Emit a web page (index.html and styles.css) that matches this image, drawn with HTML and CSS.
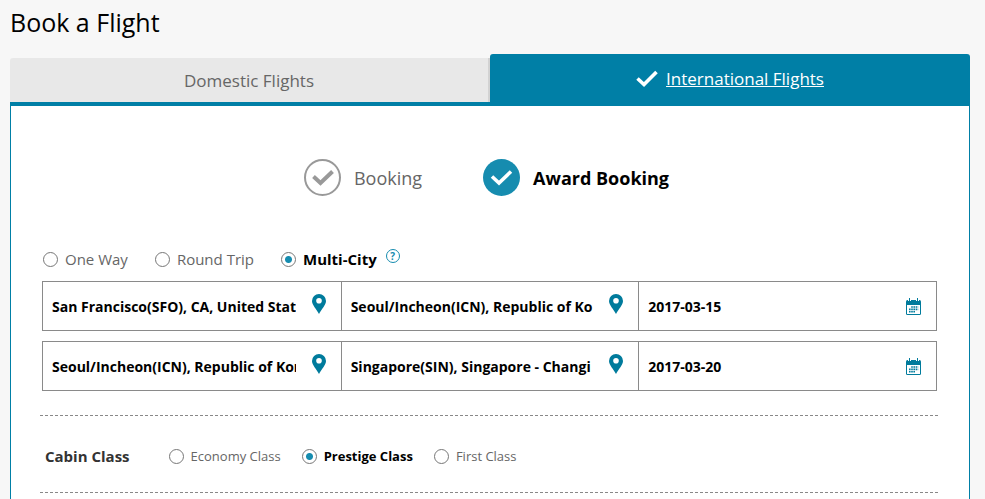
FILE: index.html
```html
<!DOCTYPE html>
<html lang="en">
<head>
<meta charset="utf-8">
<meta name="viewport" content="width=device-width, initial-scale=1">
<title>Book a Flight</title>
<link rel="stylesheet" href="styles.css">
</head>
<body>
<svg class="defs" aria-hidden="true">
  <symbol id="pin" viewBox="0 0 14 20"><path fill="currentColor" fill-rule="evenodd" d="M7 0a7 7 0 0 0-7 7c0 4 4.500 8 7 13 2.500-5 7-9 7-13a7 7 0 0 0-7-7zm0 4a2.800 2.800 0 1 1 0 5.600A2.800 2.800 0 0 1 7 4z"/></symbol>
  <symbol id="calendar" viewBox="0 0 15 17">
    <rect x="0" y="2" width="15" height="15" rx="1.500" fill="currentColor"/>
    <path fill="#fff" d="M1 7h13v9H1zM2 0h3v3H2zM10 0h3v3h-3z"/>
    <path fill="currentColor" d="M3 0h1v4H3zM11 0h1v4h-1z"/>
    <path fill="none" stroke="currentColor" stroke-width="1.600" stroke-dasharray="1.600 .6" d="M5.200 9h7M3 11.400h9.200M3 13.800h6.600"/>
  </symbol>
</svg>
<main class="page">
  <h1 class="title">Book a Flight</h1>
  <nav class="tabs">
    <a class="tab" href="#domestic">Domestic Flights</a>
    <a class="tab tab-active" href="#international" aria-current="page">
      <svg class="tab-tick" viewBox="0 0 22 17" aria-hidden="true"><path d="M1.500 8.500 8 14.500 20.500 2" fill="none" stroke="currentColor" stroke-width="3.600"/></svg>
      <span class="tab-text">International Flights</span>
    </a>
  </nav>
  <form class="panel">
    <div class="kinds">
      <button class="kind" type="button" aria-pressed="false">
        <svg class="kind-icon" viewBox="0 0 37 37" aria-hidden="true"><circle cx="18.500" cy="18.500" r="17.500" fill="none" stroke="#999" stroke-width="2"/><path d="M9.500 17.500 16.500 24 28.500 12.500" fill="none" stroke="#999" stroke-width="4"/></svg>
        <span>Booking</span>
      </button>
      <button class="kind kind-active" type="button" aria-pressed="true">
        <svg class="kind-icon" viewBox="0 0 37 37" aria-hidden="true"><circle cx="18.500" cy="18.500" r="18.500" fill="#168caf"/><path d="M9 17.500 16 24 28 12.500" fill="none" stroke="#fff" stroke-width="3.600"/></svg>
        <span>Award Booking</span>
      </button>
    </div>
    <div class="trips">
      <label class="option"><input class="radio" type="radio" name="trip"><span>One Way</span></label>
      <label class="option"><input class="radio" type="radio" name="trip"><span>Round Trip</span></label>
      <label class="option"><input class="radio" type="radio" name="trip" checked><span>Multi-City</span></label>
      <button class="help" type="button" aria-label="Help">?</button>
    </div>
    <div class="legs">
      <div class="leg">
        <div class="cell"><input class="field" type="text" aria-label="From, flight 1" value="San Francisco(SFO), CA, United Stat"><button class="pick" type="button" aria-label="Choose origin"><svg class="pin"><use href="#pin"/></svg></button></div>
        <div class="cell"><input class="field" type="text" aria-label="To, flight 1" value="Seoul/Incheon(ICN), Republic of Ko"><button class="pick" type="button" aria-label="Choose destination"><svg class="pin"><use href="#pin"/></svg></button></div>
        <div class="cell"><input class="field" type="text" aria-label="Date, flight 1" value="2017-03-15"><button class="pick pick-date" type="button" aria-label="Choose date"><svg class="calendar"><use href="#calendar"/></svg></button></div>
      </div>
      <div class="leg">
        <div class="cell"><input class="field" type="text" aria-label="From, flight 2" value="Seoul/Incheon(ICN), Republic of Korea"><button class="pick" type="button" aria-label="Choose origin"><svg class="pin"><use href="#pin"/></svg></button></div>
        <div class="cell"><input class="field" type="text" aria-label="To, flight 2" value="Singapore(SIN), Singapore - Changi"><button class="pick" type="button" aria-label="Choose destination"><svg class="pin"><use href="#pin"/></svg></button></div>
        <div class="cell"><input class="field" type="text" aria-label="Date, flight 2" value="2017-03-20"><button class="pick pick-date" type="button" aria-label="Choose date"><svg class="calendar"><use href="#calendar"/></svg></button></div>
      </div>
    </div>
    <div class="cabin" role="radiogroup" aria-labelledby="cabin-label">
      <span class="cabin-label" id="cabin-label">Cabin Class</span>
      <label class="option option-small"><input class="radio" type="radio" name="cabin"><span>Economy Class</span></label>
      <label class="option option-small"><input class="radio" type="radio" name="cabin" checked><span>Prestige Class</span></label>
      <label class="option option-small"><input class="radio" type="radio" name="cabin"><span>First Class</span></label>
    </div>
  </form>
</main>
</body>
</html>
```
FILE: styles.css
```css
* { box-sizing: border-box; }
body {
  margin: 0;
  background: #f7f7f7;
  color: #000;
  font-family: "Open Sans", sans-serif;
}
button { padding: 0; border: 0; background: none; font: inherit; color: inherit; cursor: pointer; }
.defs { display: none; }
.page {
  display: flex;
  flex-direction: column;
  min-height: 100vh;
  padding: 4px 15px 0 10px;
}
.title { margin: 0; font-size: 25px; line-height: 36px; font-weight: 400; }

.tabs {
  display: grid;
  grid-template-columns: 1fr 1fr;
  align-items: end;
  margin-top: 14px;
  border-bottom: 4px solid #007fa6;
}
.tab {
  display: flex;
  align-items: center;
  justify-content: center;
  height: 44px;
  border-radius: 3px 0 0 0;
  border-right: 2px solid #d2d2d2;
  background: #e8e8e8;
  color: #666;
  font-size: 17px;
  text-decoration: none;
}
.tab-active {
  gap: 8px;
  height: 48px;
  border-right: 0;
  border-radius: 3px 3px 0 0;
  background: #007fa6;
  color: #fff;
}
.tab-text { text-decoration: underline; }
.tab-tick { width: 22px; height: 17px; }

.panel {
  flex: 1;
  padding: 53px 31px 6px 29px;
  border: 1px solid #007fa6;
  border-width: 0 1px;
  background: #fff;
}
.kinds { display: flex; justify-content: center; gap: 61px; padding-right: 5px; }
.kind { display: flex; align-items: center; gap: 13px; color: #666; font-size: 18px; line-height: 24px; }
.kind-icon { width: 37px; height: 37px; }
.kind-active { color: #000; font-weight: 700; }

.trips { display: flex; align-items: center; gap: 27px; margin-top: 52px; padding-left: 3px; }
.option { display: flex; align-items: center; gap: 7px; color: #666; font-size: 15px; line-height: 22px; }
.option:has(:checked) { color: #000; font-weight: 700; }
.radio {
  appearance: none;
  width: 15px;
  height: 15px;
  margin: 0;
  border: 1px solid #777;
  border-radius: 50%;
  background: #fff;
}
.radio:checked { background: radial-gradient(circle, #168caf 3px, #fff 4px); }
.help {
  width: 14px;
  height: 14px;
  margin: 0 0 6px -18px;
  border: 1px solid #168caf;
  border-radius: 50%;
  color: #168caf;
  font-size: 10px;
  line-height: 12px;
  font-weight: 700;
}

.legs { display: grid; gap: 10px; margin-top: 11px; padding: 0 1px 0 2px; }
.leg { display: grid; grid-template-columns: repeat(3, 1fr); height: 50px; border: 1px solid #8a8a8a; }
.cell { display: flex; align-items: center; min-width: 0; padding: 0 15px 0 9px; }
.cell + .cell { border-left: 1px solid #8a8a8a; }
.field {
  flex: 1;
  min-width: 0;
  height: 30px;
  padding: 0;
  border: 0;
  background: none;
  color: #000;
  font: 700 14px/20px "Open Sans", sans-serif;
}
.pick { display: flex; margin: 0 0 4px 16px; color: #007b9c; }
.pick-date { margin-bottom: 0; }
.pin { width: 14px; height: 20px; }
.calendar { width: 15px; height: 17px; }

.cabin {
  display: flex;
  align-items: center;
  gap: 21px;
  height: 78px;
  margin-top: 24px;
  padding: 4px 5px 0;
  border: 1px dashed #888;
  border-width: 1px 0;
}
.cabin-label { margin-right: 18px; color: #333; font-size: 15px; line-height: 22px; font-weight: 700; }
.option-small { font-size: 13px; line-height: 20px; }
```
